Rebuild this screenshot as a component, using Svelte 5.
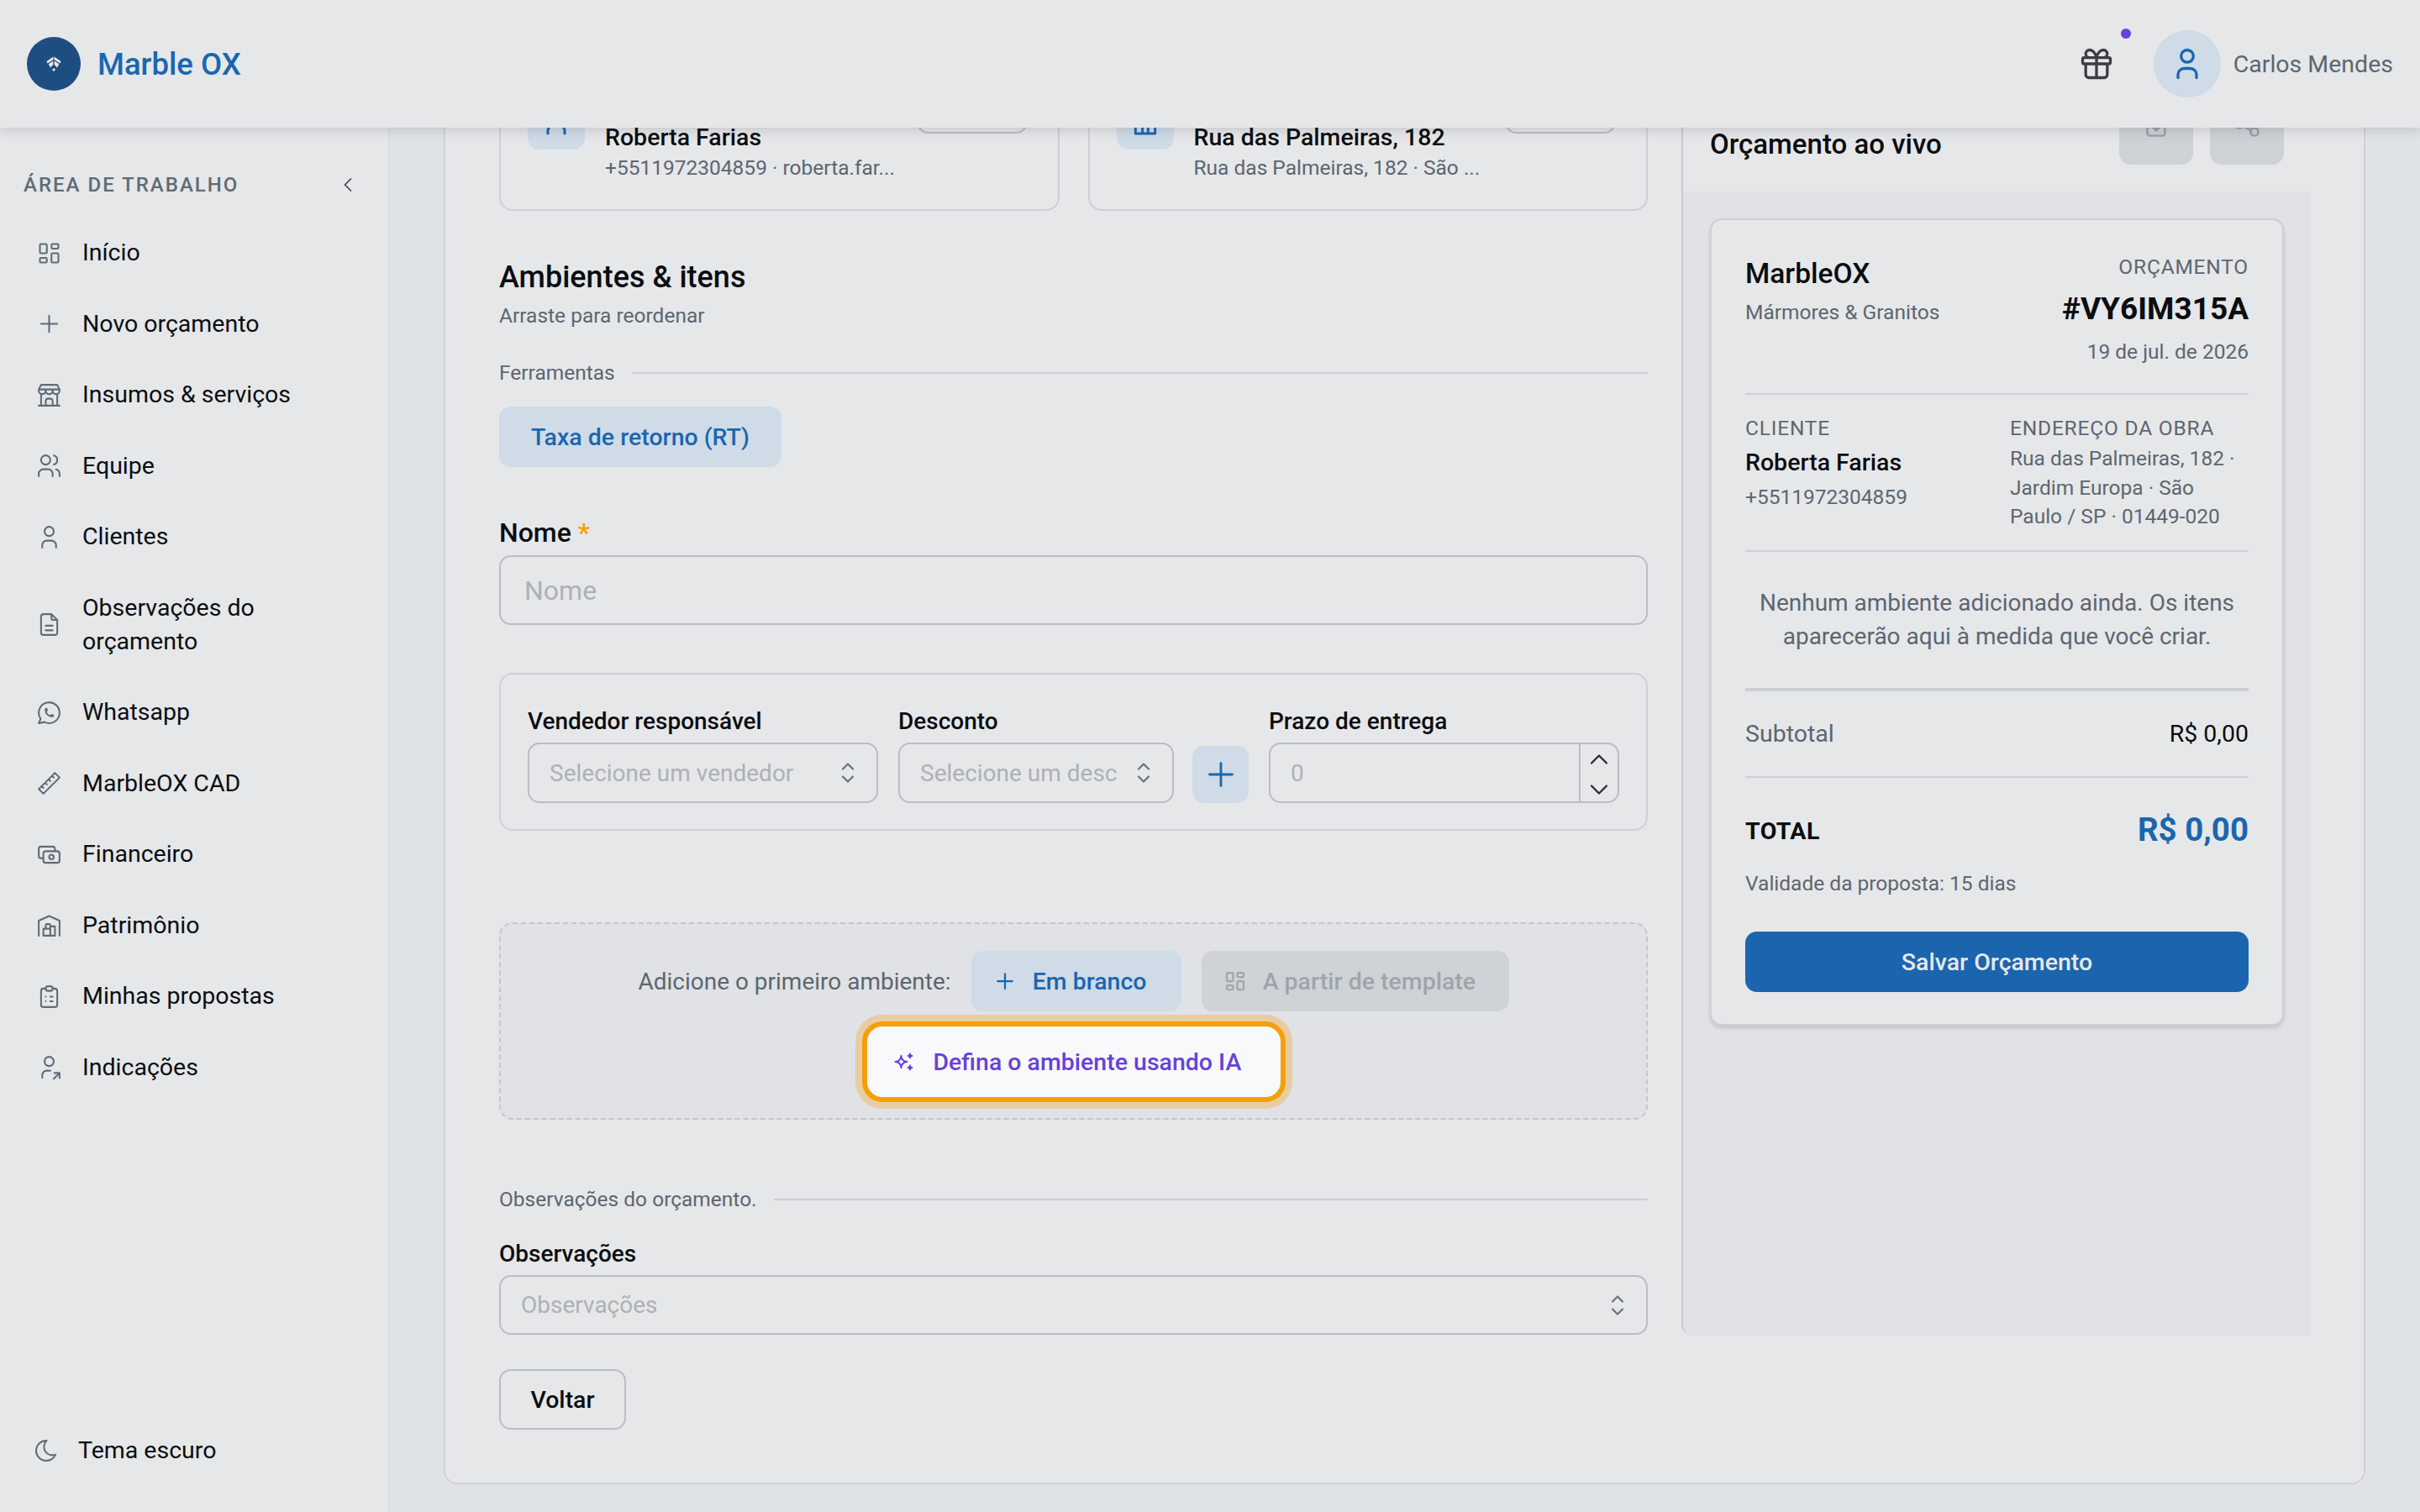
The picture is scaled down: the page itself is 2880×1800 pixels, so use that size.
<script>
  const nav = [
    { label: 'Início', d: 'M5 4h4a1 1 0 0 1 1 1v6a1 1 0 0 1 -1 1h-4a1 1 0 0 1 -1 -1v-6a1 1 0 0 1 1 -1 M5 16h4a1 1 0 0 1 1 1v2a1 1 0 0 1 -1 1h-4a1 1 0 0 1 -1 -1v-2a1 1 0 0 1 1 -1 M15 12h4a1 1 0 0 1 1 1v6a1 1 0 0 1 -1 1h-4a1 1 0 0 1 -1 -1v-6a1 1 0 0 1 1 -1 M15 4h4a1 1 0 0 1 1 1v2a1 1 0 0 1 -1 1h-4a1 1 0 0 1 -1 -1v-2a1 1 0 0 1 1 -1' },
    { label: 'Novo orçamento', d: 'M12 5v14 M5 12h14' },
    { label: 'Insumos & serviços', d: 'M3 21h18 M3 7v1a3 3 0 0 0 6 0v-1m0 1a3 3 0 0 0 6 0v-1m0 1a3 3 0 0 0 6 0v-1h-18l2 -4h14l2 4 M5 21v-10.15 M19 21v-10.15 M9 21v-4a2 2 0 0 1 2 -2h2a2 2 0 0 1 2 2v4' },
    { label: 'Equipe', d: 'M5 7a4 4 0 1 0 8 0a4 4 0 1 0 -8 0 M3 21v-2a4 4 0 0 1 4 -4h4a4 4 0 0 1 4 4v2 M16 3.13a4 4 0 0 1 0 7.75 M21 21v-2a4 4 0 0 0 -3 -3.85' },
    { label: 'Clientes', d: 'M8 7a4 4 0 1 0 8 0a4 4 0 0 0 -8 0 M6 21v-2a4 4 0 0 1 4 -4h4a4 4 0 0 1 4 4v2' },
    { label: 'Observações do orçamento', d: 'M14 3v4a1 1 0 0 0 1 1h4 M17 21h-10a2 2 0 0 1 -2 -2v-14a2 2 0 0 1 2 -2h7l5 5v11a2 2 0 0 1 -2 2z M9 17h6 M9 13h6' },
    { label: 'Whatsapp', d: 'M3 21l1.65 -3.8a9 9 0 1 1 3.4 2.9l-5.05 .9 M9 10a.5 .5 0 0 0 1 0v-1a.5 .5 0 0 0 -1 0v1a5 5 0 0 0 5 5h1a.5 .5 0 0 0 0 -1h-1a.5 .5 0 0 0 0 1' },
    { label: 'MarbleOX CAD', d: 'M17 3l4 4l-14 14l-4 -4z M16 7l-1.5 -1.5 M13 10l-1.5 -1.5 M10 13l-1.5 -1.5 M7 16l-1.5 -1.5' },
    { label: 'Financeiro', d: 'M7 11a2 2 0 0 1 2 -2h10a2 2 0 0 1 2 2v6a2 2 0 0 1 -2 2h-10a2 2 0 0 1 -2 -2z M12 14a2 2 0 1 0 4 0a2 2 0 1 0 -4 0 M17 9v-2a2 2 0 0 0 -2 -2h-10a2 2 0 0 0 -2 2v6a2 2 0 0 0 2 2h2' },
    { label: 'Patrimônio', d: 'M3 21v-13l9 -4l9 4v13 M13 13h4v8h-10v-6h6 M13 21v-9a1 1 0 0 0 -1 -1h-2a1 1 0 0 0 -1 1v3' },
    { label: 'Minhas propostas', d: 'M9 5h-2a2 2 0 0 0 -2 2v12a2 2 0 0 0 2 2h10a2 2 0 0 0 2 -2v-12a2 2 0 0 0 -2 -2h-2 M9 5a2 2 0 0 1 2 -2h2a2 2 0 0 1 2 2a2 2 0 0 1 -2 2h-2a2 2 0 0 1 -2 -2z M9 12h.01 M13 12h2 M9 16h.01 M13 16h2' },
    { label: 'Indicações', d: 'M8 7a4 4 0 1 0 8 0a4 4 0 0 0 -8 0 M6 21v-2a4 4 0 0 1 4 -4h3 M16 22l5 -5 M21 21.5v-4.5h-4.5' }
  ];
  const selector = 'M8 9l4 -4l4 4 M16 15l-4 4l-4 -4';
  const plus = 'M12 5v14 M5 12h14';
</script>

<div class="shell">
  <header class="topbar">
    <div class="brand">
      <span class="logo">
        <svg viewBox="0 0 18 18" width="18" height="18"><path d="M8.500 0.500L0.500 6L1.500 8.500L8.500 4Z M9.500 0.500L17.500 6L16.500 8.500L9.500 4Z M8.300 5.500L2.700 9.200L5 13.500L8.300 10Z M9.700 5.500L15.300 9.200L13 13.500L9.700 10Z M9 14L11 16L9 18L7 16Z" fill="#e6e8ea"/></svg>
      </span>
      <span class="brand-name">Marble OX</span>
    </div>
    <div class="top-right">
      <span class="gift">
        <svg viewBox="0 0 24 24" width="44" height="44" class="ic heavy"><path d="M3 9a1 1 0 0 1 1 -1h16a1 1 0 0 1 1 1v2a1 1 0 0 1 -1 1h-16a1 1 0 0 1 -1 -1z M12 8v13 M19 12v7a2 2 0 0 1 -2 2h-10a2 2 0 0 1 -2 -2v-7 M7.500 8a2.500 2.500 0 0 1 0 -5a4.800 8 0 0 1 4.500 5a4.800 8 0 0 1 4.500 -5a2.500 2.500 0 0 1 0 5"/></svg>
        <i class="dot"></i>
      </span>
      <span class="avatar">
        <svg viewBox="0 0 24 24" width="44" height="44" class="ic heavy"><path d="M8 7a4 4 0 1 0 8 0a4 4 0 0 0 -8 0 M6 21v-2a4 4 0 0 1 4 -4h4a4 4 0 0 1 4 4v2"/></svg>
      </span>
      <span class="user-name">Carlos Mendes</span>
    </div>
  </header>

  <div class="body">
    <aside class="sidebar">
      <div class="side-head">
        <span>ÁREA DE TRABALHO</span>
        <svg viewBox="0 0 24 24" width="28" height="28" class="ic"><path d="M15 6l-6 6l6 6"/></svg>
      </div>
      <nav>
        {#each nav as item}
          <a class="nav-item" href="#/">
            <svg viewBox="0 0 24 24" width="33" height="33" class="ic"><path d={item.d}/></svg>
            <span>{item.label}</span>
          </a>
        {/each}
      </nav>
      <div class="theme">
        <svg viewBox="0 0 24 24" width="32" height="32" class="ic"><path d="M12 3c.132 0 .263 0 .393 0a7.500 7.500 0 0 0 7.920 12.446a9 9 0 1 1 -8.313 -12.454z"/></svg>
        <span>Tema escuro</span>
      </div>
    </aside>

    <main class="main">
      <div class="card">
        <section class="form">
          <div class="pick-row">
            <div class="pick">
              <span class="pick-icon"><svg viewBox="0 0 24 24" width="40" height="40" class="ic heavy"><path d="M8 7a4 4 0 1 0 8 0a4 4 0 0 0 -8 0 M6 21v-2a4 4 0 0 1 4 -4h4a4 4 0 0 1 4 4v2"/></svg></span>
              <div class="pick-text"><strong>Roberta Farias</strong><small>+5511972304859 · roberta.far...</small></div>
              <button class="pick-edit" aria-label="Editar cliente"></button>
            </div>
            <div class="pick">
              <span class="pick-icon"><svg viewBox="0 0 24 24" width="40" height="40" class="ic heavy"><path d="M5 21h14 M5 14v7 M10 17v4 M14 17v4 M19 14v7 M5 14h14"/></svg></span>
              <div class="pick-text"><strong>Rua das Palmeiras, 182</strong><small>Rua das Palmeiras, 182 · São ...</small></div>
              <button class="pick-edit" aria-label="Editar endereço"></button>
            </div>
          </div>

          <h2>Ambientes &amp; itens</h2>
          <p class="hint">Arraste para reordenar</p>

          <div class="divider first"><span>Ferramentas</span></div>
          <button class="btn-light rt">Taxa de retorno (RT)</button>

          <label class="name-label" for="nome">Nome <em>*</em></label>
          <div class="name-input" id="nome">Nome</div>

          <div class="terms">
            <div class="field">
              <span class="lab">Vendedor responsável</span>
              <div class="select">
                <span>Selecione um vendedor</span>
                <svg viewBox="0 0 24 24" width="36" height="36" class="ic"><path d={selector}/></svg>
              </div>
            </div>
            <div class="field">
              <span class="lab">Desconto</span>
              <div class="select">
                <span>Selecione um desc</span>
                <svg viewBox="0 0 24 24" width="36" height="36" class="ic"><path d={selector}/></svg>
              </div>
            </div>
            <button class="add" aria-label="Adicionar"><svg viewBox="0 0 24 24" width="46" height="46" class="ic"><path d={plus}/></svg></button>
            <div class="field">
              <span class="lab">Prazo de entrega</span>
              <div class="select number">
                <span>0</span>
                <div class="spin">
                  <svg viewBox="0 0 24 24" width="36" height="36" class="ic"><path d="M6 15l6 -6l6 6"/></svg>
                  <svg viewBox="0 0 24 24" width="36" height="36" class="ic"><path d="M6 9l6 6l6 -6"/></svg>
                </div>
              </div>
            </div>
          </div>

          <div class="empty">
            <div class="empty-row">
              <span class="empty-text">Adicione o primeiro ambiente:</span>
              <button class="btn-light with-icon">
                <svg viewBox="0 0 24 24" width="30" height="30" class="ic heavy"><path d={plus}/></svg>
                Em branco
              </button>
              <button class="btn-off with-icon">
                <svg viewBox="0 0 24 24" width="30" height="30" class="ic heavy"><path d={nav[0].d}/></svg>
                A partir de template
              </button>
            </div>
            <button class="btn-ai">
              <svg viewBox="0 0 24 24" width="28" height="28" class="ic heavy"><path d="M16 18a2 2 0 0 1 2 2a2 2 0 0 1 2 -2a2 2 0 0 1 -2 -2a2 2 0 0 1 -2 2zm0 -12a2 2 0 0 1 2 2a2 2 0 0 1 2 -2a2 2 0 0 1 -2 -2a2 2 0 0 1 -2 2zm-7 12a6 6 0 0 1 6 -6a6 6 0 0 1 -6 -6a6 6 0 0 1 -6 6a6 6 0 0 1 6 6z"/></svg>
              Defina o ambiente usando IA
            </button>
          </div>

          <div class="divider obs"><span>Observações do orçamento.</span></div>
          <span class="lab obs-label">Observações</span>
          <div class="select wide">
            <span>Observações</span>
            <svg viewBox="0 0 24 24" width="36" height="36" class="ic"><path d={selector}/></svg>
          </div>
          <button class="back">Voltar</button>
        </section>

        <section class="live">
          <div class="live-head">
            <h3>Orçamento ao vivo</h3>
            <div class="live-actions">
              <span class="act"><svg viewBox="0 0 24 24" width="36" height="36" class="ic heavy"><path d="M5 5a2 2 0 0 1 2 -2h10a2 2 0 0 1 2 2v14a2 2 0 0 1 -2 2h-10a2 2 0 0 1 -2 -2z M12 10v7 M9 14l3 3l3 -3"/></svg></span>
              <span class="act"><svg viewBox="0 0 24 24" width="36" height="36" class="ic heavy"><path d="M3 12a3 3 0 1 0 6 0a3 3 0 1 0 -6 0 M15 6a3 3 0 1 0 6 0a3 3 0 1 0 -6 0 M15 18a3 3 0 1 0 6 0a3 3 0 1 0 -6 0 M8.700 10.700l6.600 -3.400 M8.700 13.300l6.600 3.400"/></svg></span>
            </div>
          </div>
          <div class="preview">
            <article class="paper">
              <div class="paper-top">
                <div>
                  <div class="company">MarbleOX</div>
                  <div class="tag">Mármores &amp; Granitos</div>
                </div>
                <div class="doc">
                  <div class="caps">ORÇAMENTO</div>
                  <div class="code">#VY6IM315A</div>
                  <div class="date">19 de jul. de 2026</div>
                </div>
              </div>
              <div class="parties">
                <div>
                  <div class="caps">CLIENTE</div>
                  <div class="client">Roberta Farias</div>
                  <div class="muted">+5511972304859</div>
                </div>
                <div>
                  <div class="caps">ENDEREÇO DA OBRA</div>
                  <div class="address">Rua das Palmeiras, 182 · Jardim Europa · São Paulo / SP · 01449-020</div>
                </div>
              </div>
              <p class="no-items">Nenhum ambiente adicionado ainda. Os itens aparecerão aqui à medida que você criar.</p>
              <div class="sub-row"><span>Subtotal</span><b>R$ 0,00</b></div>
              <div class="total-row"><span>TOTAL</span><b>R$ 0,00</b></div>
              <div class="validity">Validade da proposta: 15 dias</div>
              <button class="save">Salvar Orçamento</button>
            </article>
          </div>
        </section>
      </div>
    </main>
  </div>
</div>

<style>
  :global(body) {
    margin: 0;
    background: #dfe3e7;
    font-family: Roboto, "Noto Sans", sans-serif;
    color: #0b0d10;
  }

  button {
    font: inherit;
    border: none;
    padding: 0;
  }

  h2, h3, p {
    margin: 0;
  }

  .shell {
    width: 2880px;
    height: 1800px;
    display: flex;
    flex-direction: column;
    overflow: hidden;
  }

  .ic {
    fill: none;
    stroke: currentColor;
    stroke-width: 1.5;
    stroke-linecap: round;
    stroke-linejoin: round;
    flex: none;
    display: block;
  }

  .ic.heavy {
    stroke-width: 1.8;
  }

  /* top bar */
  .topbar {
    height: 152px;
    flex: none;
    background: #e5e7e9;
    display: flex;
    align-items: center;
    justify-content: space-between;
    padding: 0 32px;
    box-shadow: 0 2px 14px rgba(60, 65, 75, 0.22);
    position: relative;
    z-index: 5;
  }

  .brand {
    display: flex;
    align-items: center;
    gap: 20px;
  }

  .logo {
    width: 64px;
    height: 64px;
    border-radius: 50%;
    background: #1e4d82;
    display: flex;
    align-items: center;
    justify-content: center;
  }

  .brand-name {
    font-size: 36.5px;
    font-weight: 500;
    color: #1a66b0;
  }

  .top-right {
    display: flex;
    align-items: center;
  }

  .gift {
    position: relative;
    color: #3a3d42;
    margin-right: 46px;
  }

  .dot {
    position: absolute;
    width: 12px;
    height: 12px;
    border-radius: 50%;
    background: #6741d9;
    right: -19px;
    top: -20px;
  }

  .avatar {
    width: 80px;
    height: 80px;
    border-radius: 50%;
    background: #cfdbe7;
    color: #1a66b0;
    display: flex;
    align-items: center;
    justify-content: center;
    margin-right: 15px;
  }

  .user-name {
    font-size: 28.5px;
    color: #5c6670;
  }

  /* layout */
  .body {
    flex: 1;
    display: flex;
    min-height: 0;
  }

  .sidebar {
    width: 462px;
    flex: none;
    background: #e5e7e9;
    border-right: 2px solid #d6dee6;
    display: flex;
    flex-direction: column;
    box-sizing: content-box;
  }

  .side-head {
    display: flex;
    align-items: center;
    justify-content: space-between;
    color: #5f6b76;
    font-size: 24px;
    font-weight: 500;
    letter-spacing: 2px;
    padding: 52px 34px 0 28px;
    height: 32px;
  }

  .side-head .ic {
    color: #3f464d;
  }

  nav {
    margin-top: 23px;
    display: flex;
    flex-direction: column;
  }

  .nav-item {
    display: flex;
    align-items: center;
    gap: 23px;
    padding: 22.25px 40px 22.25px 42px;
    font-size: 28.5px;
    line-height: 40px;
    color: #0b0d10;
    text-decoration: none;
  }

  .nav-item .ic {
    color: #5f6b76;
  }

  .theme {
    margin-top: auto;
    display: flex;
    align-items: center;
    gap: 22px;
    padding: 0 0 55px 39px;
    font-size: 28.5px;
    line-height: 36px;
  }

  .theme .ic {
    color: #5f6b76;
  }

  .main {
    flex: 1;
    min-width: 0;
    padding: 0 65px 0 64px;
    overflow: hidden;
  }

  .card {
    margin-top: -100px;
    height: 1715px;
    box-sizing: border-box;
    background: #e6e7e9;
    border: 2px solid #cfd2d7;
    border-radius: 16px;
    padding: 37px 63px 0 64px;
    display: flex;
    gap: 40px;
  }

  .form {
    width: 1367px;
    flex: none;
    display: flex;
    flex-direction: column;
    align-items: flex-start;
  }

  /* picked client / address */
  .pick-row {
    display: flex;
    gap: 34px;
    width: 100%;
  }

  .pick {
    flex: 1;
    height: 160px;
    box-sizing: border-box;
    border: 2px solid #cdd0d5;
    border-radius: 16px;
    padding: 17px 32px;
    display: flex;
    gap: 24px;
    position: relative;
  }

  .pick-icon {
    width: 68px;
    height: 68px;
    border-radius: 14px;
    background: #cfdbe7;
    color: #1a66b0;
    display: flex;
    align-items: center;
    justify-content: center;
    flex: none;
  }

  .pick-text {
    display: flex;
    flex-direction: column;
    padding-top: 34px;
  }

  .pick-text strong {
    font-size: 28.5px;
    line-height: 40px;
    font-weight: 500;
  }

  .pick-text small {
    font-size: 24.5px;
    line-height: 32px;
    color: #5c6670;
  }

  .pick-edit {
    position: absolute;
    right: 36px;
    top: 2px;
    width: 132px;
    height: 64px;
    background: transparent;
    border: 2px solid #b9bec4;
    border-radius: 14px;
  }

  h2 {
    font-size: 36px;
    line-height: 44px;
    font-weight: 500;
    margin-top: 57px;
  }

  .hint {
    font-size: 24.5px;
    line-height: 32px;
    color: #5c6670;
    margin-top: 8px;
  }

  .divider {
    display: flex;
    align-items: center;
    gap: 20px;
    width: 100%;
    font-size: 24.5px;
    line-height: 32px;
    color: #5c6670;
  }

  .divider::after {
    content: '';
    flex: 1;
    height: 2px;
    background: #cdd0d5;
  }

  .divider.first {
    margin-top: 36px;
  }

  .btn-light {
    background: #cfdbe7;
    color: #1a66b0;
    font-weight: 500;
    border-radius: 14px;
    height: 72px;
    font-size: 28.5px;
  }

  .rt {
    width: 336px;
    margin-top: 24px;
  }

  .name-label {
    font-size: 32px;
    line-height: 40px;
    font-weight: 500;
    margin-top: 58px;
  }

  .name-label em {
    font-style: normal;
    color: #f59f0a;
  }

  .name-input {
    margin-top: 7px;
    width: 100%;
    height: 83px;
    box-sizing: border-box;
    border: 2px solid #b9bec4;
    border-radius: 14px;
    padding-left: 28px;
    display: flex;
    align-items: center;
    font-size: 32px;
    color: #adb1b6;
  }

  .terms {
    margin-top: 57px;
    width: 100%;
    box-sizing: border-box;
    height: 188px;
    border: 2px solid #cdd0d5;
    border-radius: 16px;
    padding: 38px 32px 0 32px;
    display: grid;
    grid-template-columns: 417px 328px 65px 1fr;
    column-gap: 24px;
    align-items: end;
    align-content: start;
  }

  .field {
    display: flex;
    flex-direction: column;
    gap: 7px;
  }

  .lab {
    font-size: 28px;
    line-height: 36px;
    font-weight: 500;
  }

  .select {
    height: 72px;
    box-sizing: border-box;
    border: 2px solid #b9bec4;
    border-radius: 14px;
    display: flex;
    align-items: center;
    justify-content: space-between;
    padding: 0 16px 0 24px;
    font-size: 28px;
    color: #adb1b6;
  }

  .select .ic {
    color: #6b737c;
  }

  .number {
    padding-right: 0;
  }

  .spin {
    width: 46px;
    height: 100%;
    border-left: 2px solid #b9bec4;
    display: flex;
    flex-direction: column;
    justify-content: space-between;
    align-items: center;
    box-sizing: border-box;
  }

  .spin .ic {
    color: #26292d;
  }

  .add {
    width: 67px;
    height: 68px;
    margin-left: -2px;
    background: #cfdbe7;
    color: #1a66b0;
    border-radius: 14px;
    display: flex;
    align-items: center;
    justify-content: center;
  }

  .empty {
    margin-top: 109px;
    width: 100%;
    height: 235px;
    box-sizing: border-box;
    background: #e0e2e5;
    border: 2px dashed #c3c7cd;
    border-radius: 16px;
    padding-top: 32px;
    display: flex;
    flex-direction: column;
    align-items: center;
  }

  .empty-row {
    display: flex;
    align-items: center;
    gap: 24px;
  }

  .empty-text {
    font-size: 28px;
    color: #5c6670;
  }

  .with-icon {
    display: flex;
    align-items: center;
    gap: 18px;
    height: 72px;
    padding-left: 25px;
    box-sizing: border-box;
  }

  .empty-row .btn-light {
    width: 250px;
  }

  .btn-off {
    width: 366px;
    background: #cfd2d6;
    color: #a0a4ab;
    font-weight: 500;
    font-size: 28.5px;
    border-radius: 14px;
  }

  .btn-ai {
    margin-top: 12px;
    width: 504px;
    height: 96px;
    box-sizing: border-box;
    background: #f8f9fb;
    border: 6px solid #f59f0a;
    border-radius: 24px;
    box-shadow: 0 0 0 8px #e8cda3;
    color: #6741d9;
    font-weight: 500;
    font-size: 28.5px;
    display: flex;
    align-items: center;
    gap: 21px;
    padding-left: 30px;
  }

  .divider.obs {
    margin-top: 79px;
  }

  .obs-label {
    margin-top: 31px;
  }

  .wide {
    margin-top: 7px;
    width: 100%;
    height: 71px;
  }

  .back {
    margin-top: 41px;
    width: 151px;
    height: 72px;
    background: transparent;
    border: 2px solid #b9bec4;
    border-radius: 14px;
    font-size: 28.5px;
    font-weight: 500;
    color: #0b0d10;
  }

  /* live preview */
  .live {
    flex: 1;
    height: 1536px;
    margin-top: -37px;
    border-left: 2px solid #c5c8ce;
    border-bottom-left-radius: 14px;
    display: flex;
    flex-direction: column;
    min-width: 0;
  }

  .live-head {
    height: 174px;
    flex: none;
    box-sizing: border-box;
    display: flex;
    justify-content: space-between;
    align-items: flex-end;
    padding: 0 32px 32px 32px;
  }

  h3 {
    font-size: 33px;
    line-height: 40px;
    font-weight: 500;
    padding-bottom: 4px;
  }

  .live-actions {
    display: flex;
    gap: 20px;
  }

  .act {
    width: 88px;
    height: 88px;
    background: #ced2d7;
    color: #9da2a9;
    border-radius: 14px;
    display: flex;
    justify-content: center;
    padding-top: 22px;
    box-sizing: border-box;
  }

  .preview {
    flex: 1;
    background: #e0e2e5;
    padding: 32px 32px 0 32px;
    border-bottom-left-radius: 14px;
  }

  .paper {
    height: 961px;
    box-sizing: border-box;
    background: #e6e7e9;
    border: 2px solid #cdd0d5;
    border-radius: 14px;
    box-shadow: 0 3px 4px rgba(90, 95, 105, 0.22);
    padding: 40px 40px 0 40px;
  }

  .paper-top {
    display: flex;
    justify-content: space-between;
    height: 166px;
    border-bottom: 2px solid #cdd0d5;
  }

  .company {
    font-size: 33.5px;
    line-height: 44px;
    font-weight: 500;
    margin-top: 2px;
  }

  .tag {
    font-size: 24.5px;
    line-height: 32px;
    color: #5c6670;
    margin-top: 8px;
  }

  .doc {
    text-align: right;
  }

  .caps {
    font-size: 24.5px;
    line-height: 32px;
    color: #5c6670;
    letter-spacing: 0.8px;
  }

  .code {
    font-size: 37px;
    line-height: 48px;
    font-weight: 700;
    margin-top: 10px;
  }

  .date {
    font-size: 24.5px;
    line-height: 32px;
    color: #5c6670;
    margin-top: 11px;
  }

  .parties {
    display: grid;
    grid-template-columns: 315px 1fr;
    height: 187px;
    padding-top: 24px;
    box-sizing: border-box;
    border-bottom: 2px solid #cdd0d5;
  }

  .client {
    font-size: 28.5px;
    line-height: 40px;
    font-weight: 500;
    margin-top: 5px;
  }

  .muted {
    font-size: 24.5px;
    line-height: 32px;
    color: #5c6670;
    margin-top: 5px;
  }

  .address {
    font-size: 24.5px;
    line-height: 34.500px;
    color: #5c6670;
    margin-top: 3px;
  }

  .no-items {
    height: 166px;
    box-sizing: border-box;
    padding: 41px 10px 0;
    text-align: center;
    font-size: 28px;
    line-height: 40px;
    color: #5c6670;
    border-bottom: 4px solid #cbced3;
  }

  .sub-row {
    display: flex;
    justify-content: space-between;
    align-items: center;
    height: 103px;
    box-sizing: border-box;
    border-bottom: 2px solid #cdd0d5;
    font-size: 28.5px;
    color: #5c6670;
  }

  .sub-row b {
    font-weight: 400;
    color: #0b0d10;
  }

  .total-row {
    display: flex;
    justify-content: space-between;
    align-items: center;
    height: 110px;
    padding-top: 10px;
    box-sizing: border-box;
    font-size: 28.5px;
    font-weight: 700;
  }

  .total-row span {
    padding-top: 6px;
    letter-spacing: 0.4px;
  }

  .total-row b {
    font-size: 38.5px;
    color: #1a66b0;
    font-weight: 700;
    padding-top: 2px;
  }

  .validity {
    font-size: 24.5px;
    line-height: 32px;
    color: #5c6670;
  }

  .save {
    margin-top: 41px;
    width: 100%;
    height: 72px;
    background: #1a65ae;
    color: #e6e8ea;
    border-radius: 14px;
    font-size: 28.5px;
    font-weight: 500;
  }
</style>
